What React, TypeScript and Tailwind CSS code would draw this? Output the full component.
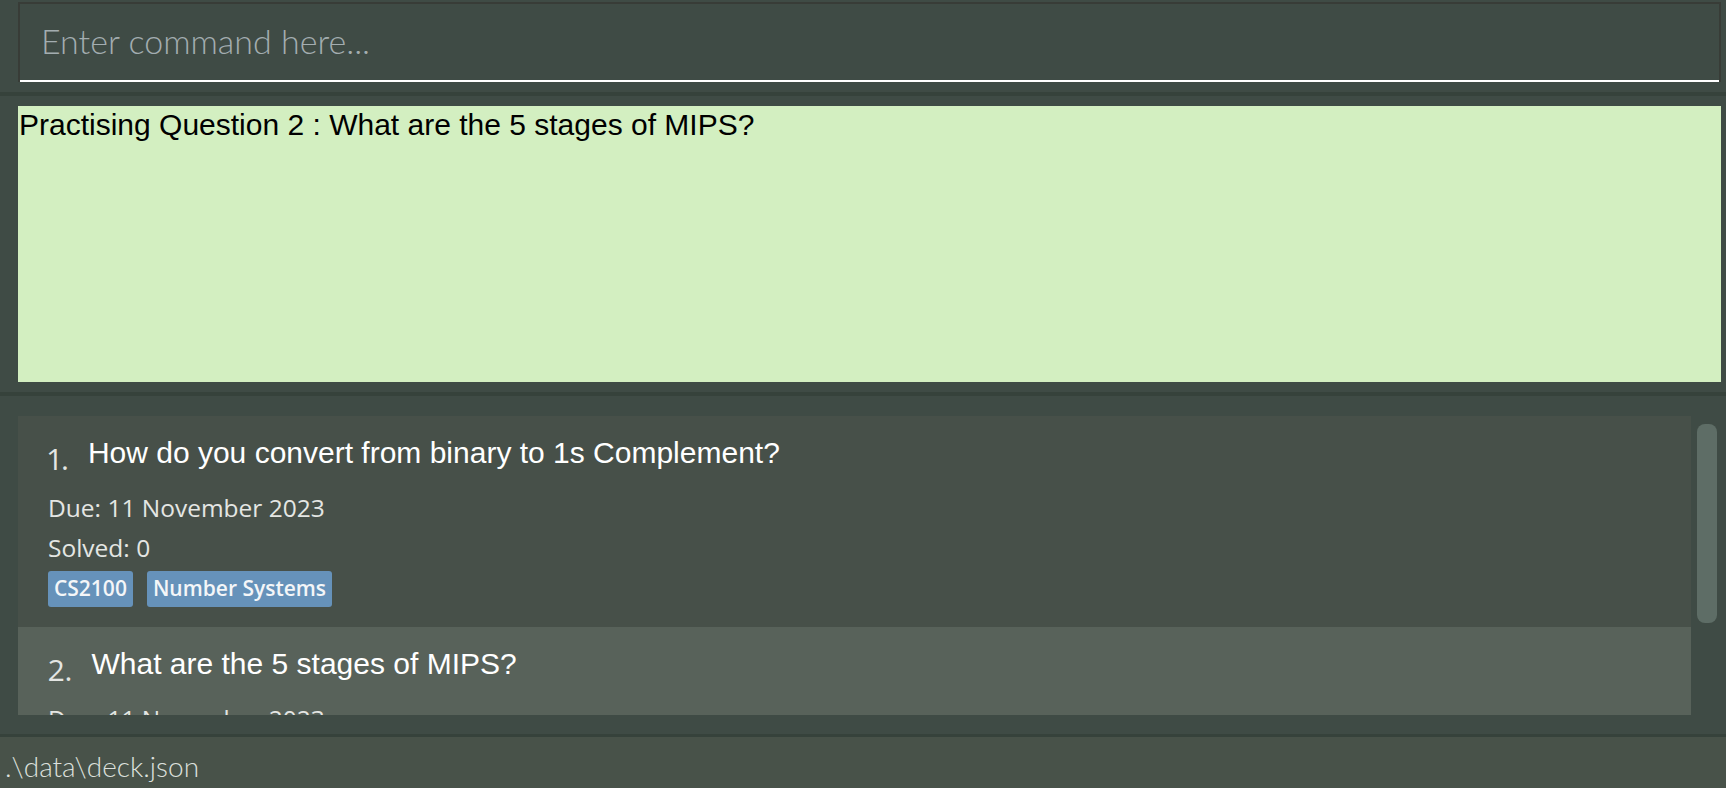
import { useState } from "react";

type Card = {
  id: number;
  question: string;
  due: string;
  solved: number;
  tags: string[];
};

const cards: Card[] = [
  {
    id: 1,
    question: "How do you convert from binary to 1s Complement?",
    due: "11 November 2023",
    solved: 0,
    tags: ["CS2100", "Number Systems"],
  },
  {
    id: 2,
    question: "What are the 5 stages of MIPS?",
    due: "11 November 2023",
    solved: 0,
    tags: ["CS2100", "MIPS"],
  },
];

const sansUi = "font-['Open_Sans','Noto_Sans',sans-serif]";
const arial = "font-['Liberation_Sans',Arial,sans-serif]";

function CardRow({ card, selected }: { card: Card; selected: boolean }) {
  return (
    <div
      className={`shrink-0 pl-[30px] pt-[22px] pb-[20px] ${
        selected ? "bg-[#58625a]" : "bg-[#475049]"
      }`}
    >
      {/* number + question */}
      <div className="flex items-start gap-[19px]">
        <span className={`${sansUi} mt-[6px] text-[30px] font-medium leading-none text-[#e4e6e3] proportional-nums`}>
          {card.id}.
        </span>
        <span className={`${arial} text-[30px] leading-none text-white`}>
          {card.question}
        </span>
      </div>
      <div className={`${sansUi} mt-[14px] text-[24.5px] leading-[40px] text-[#e4e6e3]`}>
        Due: {card.due}
      </div>
      <div className={`${sansUi} text-[24.5px] leading-[40px] text-[#e4e6e3]`}>
        Solved: {card.solved}
      </div>
      <div className="mt-[3px] flex gap-[14px]">
        {card.tags.map((t) => (
          <span
            key={t}
            className={`${sansUi} flex h-[36px] items-center rounded-[3px] bg-[#6692ba] px-[6px] text-[21px] font-semibold text-[#f4f6f8]`}
          >
            {t}
          </span>
        ))}
      </div>
    </div>
  );
}

export default function App() {
  const [command, setCommand] = useState("");

  return (
    <div className="flex h-[788px] w-full flex-col overflow-hidden bg-[#3f4b45]">
      {/* command box */}
      <div className="h-[92px] shrink-0 pl-[18px] pr-[5px] pt-[2px]">
        <div className="h-[80px] border-2 border-b-0 border-[#383c37]">
          <input
            value={command}
            onChange={(e) => setCommand(e.target.value)}
            placeholder="Enter command here..."
            className="h-full w-full border-b-2 border-white bg-transparent pb-[4px] pl-[21px] font-['Lato','Open_Sans',sans-serif] text-[34px] font-light text-white outline-none placeholder:text-[#a3adb0]"
          />
        </div>
      </div>
      <div className="h-[4px] shrink-0 bg-[#36423b]" />

      {/* result display */}
      <div className="h-[296px] shrink-0 pl-[18px] pr-[5px] pt-[10px]">
        <div className="h-[276px] bg-[#d3efc1] pl-[1px] pt-[4px]">
          <p className={`${arial} text-[30px] leading-none text-black`}>
            Practising Question 2 : What are the 5 stages of MIPS?
          </p>
        </div>
      </div>
      <div className="h-[4px] shrink-0 bg-[#36423b]" />

      {/* card list */}
      <div className="h-[338px] shrink-0 pt-[20px]">
        <div className="flex h-[299px] pl-[18px]">
          <div className="flex w-[1673px] flex-col overflow-hidden">
            {cards.map((c) => (
              <CardRow key={c.id} card={c} selected={c.id === 2} />
            ))}
          </div>
          <div className="ml-[6px] pt-[8px]">
            <div className="h-[199px] w-[20px] rounded-[8px] bg-[#5e6d66]" />
          </div>
        </div>
      </div>
      <div className="h-[3px] shrink-0 bg-[#36423b]" />

      {/* status bar */}
      <div className="flex-1 bg-[#485249] pl-[5px] pt-[15px]">
        <span className="font-['Lato','Open_Sans',sans-serif] text-[28px] font-light leading-none text-[#dde0dd]">
          .\data\deck.json
        </span>
      </div>
    </div>
  );
}
